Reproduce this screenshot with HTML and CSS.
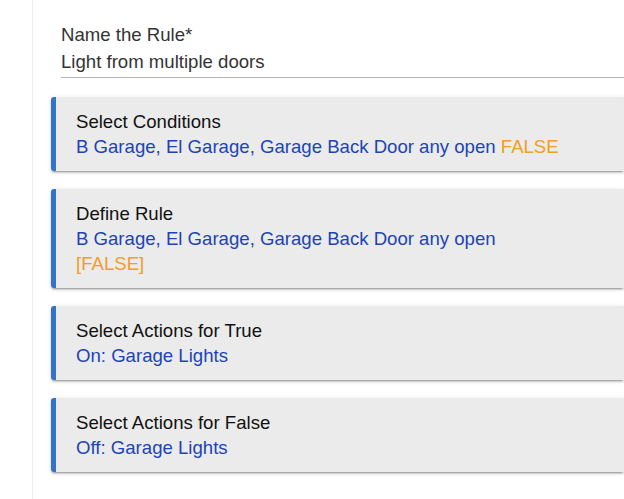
FILE: index.html
```html
<!DOCTYPE html>
<html>
<head>
<meta charset="utf-8">
<link rel="stylesheet" href="styles.css">
</head>
<body>
<div class="page">
  <div class="field">
    <div class="label">Name the Rule*</div>
    <div class="value">Light from multiple doors</div>
  </div>
  <div class="card">
    <div class="title">Select Conditions</div>
    <div class="sub">B Garage, El Garage, Garage Back Door any open <span class="state">FALSE</span></div>
  </div>
  <div class="card">
    <div class="title">Define Rule</div>
    <div class="sub">B Garage, El Garage, Garage Back Door any open</div>
    <div class="state">[FALSE]</div>
  </div>
  <div class="card">
    <div class="title">Select Actions for True</div>
    <div class="sub">On: Garage Lights</div>
  </div>
  <div class="card">
    <div class="title">Select Actions for False</div>
    <div class="sub">Off: Garage Lights</div>
  </div>
</div>
</body>
</html>
```
FILE: styles.css
```css
html, body {
  margin: 0;
  padding: 0;
  background: #fff;
}
body {
  font-family: "Liberation Sans", Arial, Helvetica, sans-serif;
  font-size: 18.6px;
  line-height: 25px;
  overflow: hidden;
  height: 499px;
}
.page {
  margin-left: 32px;
  border-left: 1px solid #ececec;
  height: 499px;
  padding: 22px 0 0 18px;
  box-sizing: border-box;
}
.field {
  margin-left: 10px;
  border-bottom: 1px solid #b5b5b5;
  padding-bottom: 3px;
  margin-bottom: 19px;
}
.label {
  color: #333;
}
.value {
  color: #333;
  margin-top: 2px;
}
.card {
  background: #ebebeb;
  border-left: 5px solid #3374c6;
  border-radius: 3px 0 0 3px;
  padding: 12px 0 11.5px 20px;
  margin-bottom: 18.5px;
  box-shadow: 0 2px 2px 0 rgba(0,0,0,.14), 0 3px 1px -2px rgba(0,0,0,.2), 0 1px 5px 0 rgba(0,0,0,.12);
}
.title {
  color: #111;
}
.sub {
  color: #1c44b6;
}
.state {
  color: #f39c26;
}
```
